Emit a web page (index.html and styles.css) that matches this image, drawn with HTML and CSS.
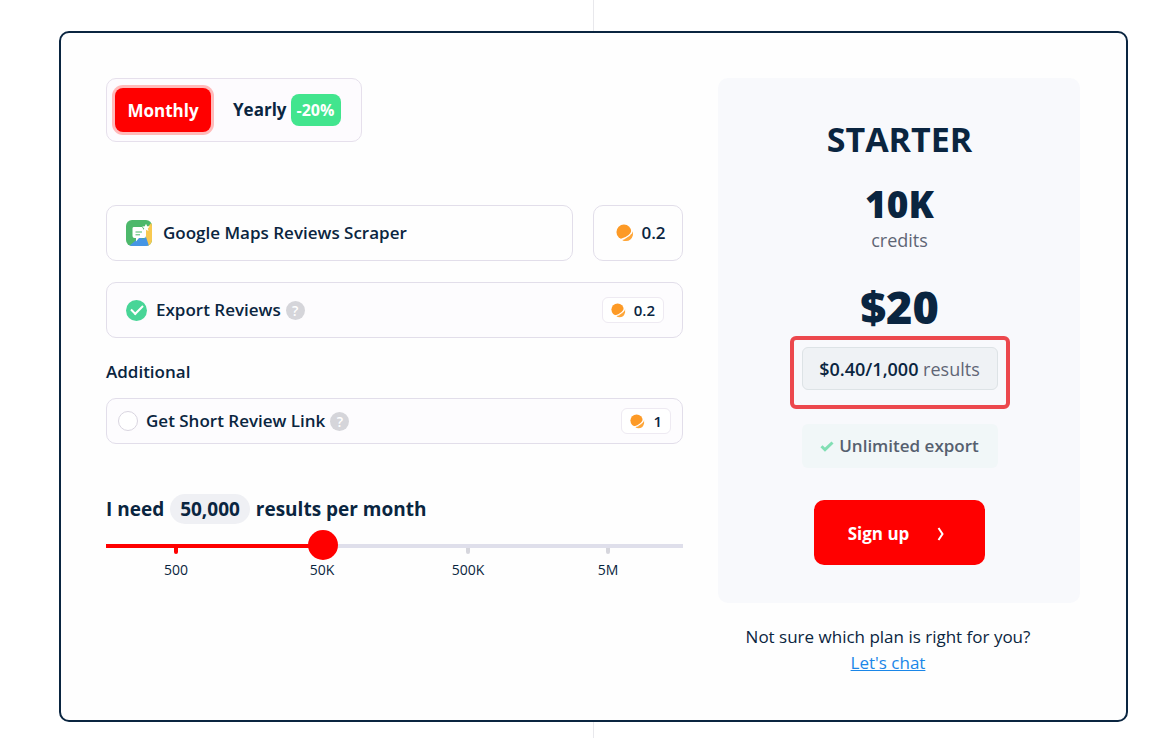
FILE: index.html
```html
<!DOCTYPE html>
<html lang="en">
<head>
<meta charset="utf-8">
<title>Pricing calculator</title>
<link rel="stylesheet" href="styles.css">
</head>
<body>
<svg class="sprite" aria-hidden="true">
  <symbol id="coin" viewBox="0 0 20 20">
    <circle cx="8.800" cy="8.800" r="8.300" fill="#fd9a26"/>
    <path d="M18.800 7.500Q17.800 13.500 7 18.300Q16.500 21 18.800 12.500z" fill="#ffa638"/>
    <path d="M18.300 6.500Q16.500 14.500 5 17.300" fill="none" stroke="#fff" stroke-width="1.500"/>
  </symbol>
</svg>
<main class="page">
  <section class="card">
    <div class="calculator">
      <div class="toggle" role="group" aria-label="Billing period">
        <button class="period period-active" type="button">Monthly</button>
        <button class="period" type="button">Yearly <span class="discount">-20%</span></button>
      </div>

      <div class="service-row">
        <div class="box service">
          <svg class="service-icon" viewBox="0 0 26 26" aria-hidden="true">
            <defs><clipPath id="rounded"><rect width="26" height="26" rx="6"/></clipPath></defs>
            <g clip-path="url(#rounded)">
              <rect width="26" height="26" fill="#4db86b"/>
              <path d="M20 26V9l6-7v24z" fill="#f8c950"/>
              <path d="M3 26L14 17l3 2 3-2 3 9z" fill="#4595e4"/>
              <path d="M7.500 7H16l2 3h2v6q0 2-2 2h-5l-3 3.500V18H8.500q-2 0-2-2V8.500Q6.500 7 7.500 7z" fill="#fff"/>
              <path d="M20 3.800l1.200 2.500 2.600.2-2 1.900.7 2.700-2.500-1.300-2.400 1.300.6-2.700-2-1.900 2.600-.2z" fill="#fff"/>
              <path d="M9.500 12H16M9.500 14.800H14" stroke="#4db86b" stroke-width="1"/>
            </g>
          </svg>
          <span>Google Maps Reviews Scraper</span>
        </div>
        <div class="box service-price"><svg class="coin-large" aria-hidden="true"><use href="#coin"/></svg>0.2</div>
      </div>

      <div class="box option option-tall">
        <input class="check check-green" type="checkbox" id="export" checked>
        <label for="export">Export Reviews</label>
        <button class="help" type="button" aria-label="About export">?</button>
        <span class="chip"><svg class="coin-small" aria-hidden="true"><use href="#coin"/></svg>0.2</span>
      </div>

      <h2 class="additional">Additional</h2>
      <div class="box option option-short">
        <input class="check" type="checkbox" id="link">
        <label for="link">Get Short Review Link</label>
        <button class="help" type="button" aria-label="About short link">?</button>
        <span class="chip"><svg class="coin-small" aria-hidden="true"><use href="#coin"/></svg>1</span>
      </div>

      <label class="need" for="amount">I need <span class="amount">50,000</span> results per month</label>
      <input class="slider" type="range" id="amount" min="0" max="100" value="37">
      <div class="scale">
        <span class="mark mark-passed">500</span>
        <span class="mark mark-current">50K</span>
        <span class="mark">500K</span>
        <span class="mark">5M</span>
      </div>
    </div>

    <aside class="side">
      <div class="plan">
        <h1 class="plan-name">STARTER</h1>
        <div class="credits">10K</div>
        <div class="credits-label">credits</div>
        <div class="price">$20</div>
        <div class="highlight">
          <div class="rate"><strong>$0.40/1,000</strong> results</div>
        </div>
        <div class="unlimited"><svg class="tick" viewBox="0 0 14 11" aria-hidden="true"><path d="M1.500 5.200L5 8.700 12.500 1.500"/></svg>Unlimited export</div>
        <button class="signup" type="button">Sign up <svg class="chevron" viewBox="0 0 8 14" aria-hidden="true"><path d="M1.500 1L5.500 7l-4 6"/></svg></button>
      </div>
      <p class="question">Not sure which plan is right for you?<br><a class="chat" href="#chat">Let's chat</a></p>
    </aside>
  </section>
</main>
</body>
</html>
```
FILE: styles.css
```css
* {
  box-sizing: border-box;
}

body {
  margin: 0;
  background: #fff;
  color: #0a2540;
  font-family: "Open Sans", "Noto Sans", sans-serif;
  font-size: 17px;
  line-height: 24px;
}

button {
  border: 0;
  padding: 0;
  background: none;
  color: inherit;
  font: inherit;
  cursor: pointer;
}

input {
  margin: 0;
}

.sprite {
  display: none;
}

.page {
  display: flex;
  flex-direction: column;
  min-height: 100vh;
  padding: 0 30px 0 59px;
}

.page::before,
.page::after {
  content: "";
  flex: none;
  align-self: center;
  width: 1px;
  height: 31px;
  background: #e8e8ec;
}

.page::after {
  height: 16px;
}

.card {
  flex: 1;
  display: grid;
  grid-template-columns: minmax(0, 577fr) minmax(0, 362fr);
  column-gap: 35px;
  padding: 45px 46px 24px 45px;
  border: 2px solid #0a2540;
  border-radius: 10px;
  background: #fefefe;
}

.toggle {
  display: flex;
  align-items: center;
  width: 256px;
  height: 64px;
  padding: 0 8px;
  border: 1px solid #e6e0ec;
  border-radius: 10px;
  background: #fdfbfe;
}

.period {
  display: flex;
  flex: none;
  align-items: center;
  gap: 4px;
  height: 44px;
  padding: 0 20px 0 22px;
  border-radius: 8px;
  font-weight: 700;
}

.period-active {
  justify-content: center;
  width: 96px;
  padding: 2px 0 0;
  background: #f00;
  color: #fff;
  box-shadow: 0 0 0 3px #ffbaba;
}

.discount {
  width: 50px;
  padding: 4px 0;
  border-radius: 8px;
  background: #42e58e;
  color: #fff;
  font-size: 16px;
  text-align: center;
}

.box {
  display: flex;
  align-items: center;
  border: 1px solid #e2deea;
  border-radius: 10px;
  font-weight: 600;
}

.service-row {
  display: flex;
  gap: 20px;
  margin: 63px 0 21px;
}

.service {
  flex: 1;
  gap: 11px;
  height: 56px;
  padding: 0 19px;
}

.service-icon {
  width: 26px;
  height: 26px;
}

.service-price {
  justify-content: center;
  gap: 7px;
  width: 90px;
  height: 56px;
  padding-left: 6px;
}

.coin-large {
  width: 18px;
  height: 18px;
}

.coin-small {
  width: 15px;
  height: 15px;
}

.option {
  background: #fdfcfe;
}

.option-tall {
  height: 56px;
  padding: 0 18px 0 19px;
}

.option-short {
  height: 46px;
  padding: 0 11px;
}

.check {
  appearance: none;
  flex: none;
  width: 20px;
  height: 20px;
  margin-right: 8px;
  border: 1px solid #d9d5e0;
  border-radius: 50%;
  background: #fff;
}

.check-green {
  display: grid;
  place-items: center;
  width: 21px;
  height: 21px;
  margin-right: 9px;
  border: 0;
  background: #48d597;
}

.check-green::after {
  content: "";
  width: 10px;
  height: 5px;
  margin-bottom: 3px;
  border: solid #fff;
  border-width: 0 0 2px 2px;
  transform: rotate(-45deg);
}

.help {
  width: 19px;
  height: 19px;
  margin-left: 5px;
  border-radius: 50%;
  background: #d5d5da;
  color: #fff;
  font-size: 14px;
  line-height: 19px;
}

.chip {
  display: flex;
  align-items: center;
  justify-content: center;
  gap: 8px;
  height: 26px;
  margin-left: auto;
  padding: 0 8px;
  border: 1px solid #eeeaf2;
  border-radius: 6px;
  background: #fff;
  font-size: 15px;
}

.additional {
  margin: 22px 0 14px;
  font-size: 17px;
  font-weight: 600;
  line-height: 24px;
}

.need {
  display: block;
  margin-top: 50px;
  font-size: 19px;
  font-weight: 700;
  line-height: 30px;
}

.amount {
  display: inline-block;
  margin: 0 1px;
  padding: 0 10px;
  border-radius: 15px;
  background: #eff0f4;
}

.slider {
  appearance: none;
  display: block;
  width: 100%;
  height: 30px;
  margin-top: 6px;
  background: linear-gradient(90deg, #f00 37%, #dfdfeb 37%) 0 14px / 100% 4px no-repeat;
}

.slider::-webkit-slider-thumb {
  appearance: none;
  width: 30px;
  height: 30px;
  border-radius: 50%;
  background: #f00;
}

.scale {
  display: grid;
  grid-template-columns: 140fr 152fr 140fr 140fr 5fr;
  margin-top: -12px;
  font-size: 14px;
  font-weight: 500;
  line-height: 20px;
  text-align: center;
}

.mark::before {
  content: "";
  display: block;
  width: 4px;
  height: 6px;
  margin: 0 auto 6px;
  border-radius: 0 0 2px 2px;
  background: #d6d6dd;
}

.mark-passed::before {
  background: #f00;
}

.mark-current::before {
  background: none;
}

.side {
  text-align: center;
}

.plan {
  display: flex;
  flex-direction: column;
  align-items: center;
  padding: 36px 20px 38px 21px;
  border-radius: 10px;
  background: #f8f9fc;
}

.plan-name {
  margin: 0;
  font-size: 34px;
  font-weight: 700;
  line-height: 50px;
}

.credits {
  margin-top: 14px;
  font-size: 37px;
  font-weight: 800;
  line-height: 52px;
}

.credits-label {
  color: #5f6675;
  font-size: 18px;
  line-height: 20px;
}

.price {
  margin-top: 28px;
  font-size: 45px;
  font-weight: 800;
  line-height: 58px;
}

.highlight {
  width: 220px;
  height: 73px;
  margin-bottom: 15px;
  padding: 7px 8px;
  border: 4px solid #ec484d;
  border-radius: 6px;
}

.rate {
  padding-top: 2px;
  border: 1px solid #dde3e6;
  border-radius: 6px;
  background: #eff2f5;
  color: #5f6675;
  font-size: 18px;
  line-height: 39px;
}

.rate strong {
  color: #0a2540;
  font-weight: 600;
}

.unlimited {
  display: flex;
  align-items: center;
  justify-content: center;
  gap: 5px;
  width: 196px;
  height: 44px;
  border-radius: 6px;
  background: #f1f7f8;
  color: #56606f;
  font-weight: 600;
}

.tick {
  width: 14px;
  height: 11px;
  fill: none;
  stroke: #82dfb4;
  stroke-width: 3;
}

.signup {
  display: flex;
  align-items: center;
  justify-content: center;
  gap: 28px;
  width: 171px;
  height: 65px;
  margin-top: 32px;
  padding: 2px 6px 0 0;
  border-radius: 10px;
  background: #f00;
  color: #fff;
  font-weight: 700;
}

.chevron {
  width: 8px;
  height: 14px;
  fill: none;
  stroke: #fff;
  stroke-width: 2;
}

.question {
  margin: 21px 22px 0 0;
  line-height: 26px;
}

.chat {
  color: #1a86e8;
}
```
